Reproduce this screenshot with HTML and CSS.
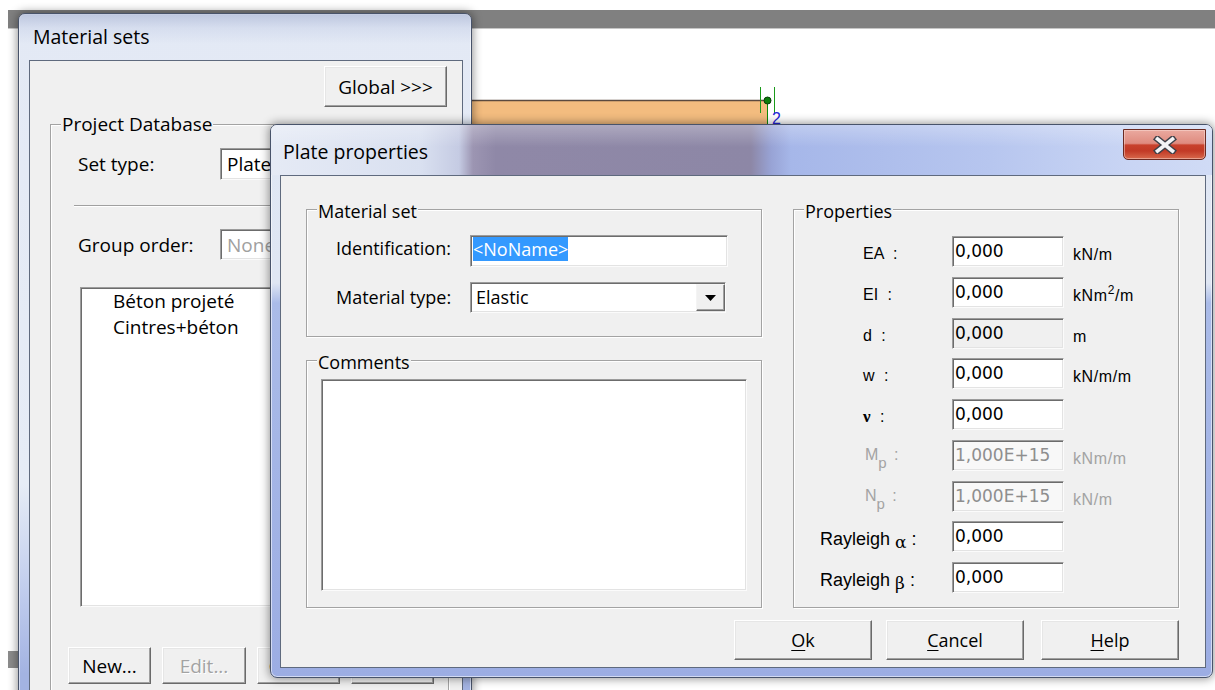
FILE: index.html
```html
<!DOCTYPE html>
<html lang="en">
<head>
<meta charset="utf-8">
<title>Plate properties</title>
<link rel="stylesheet" href="styles.css">
</head>
<body>
<div class="desktop">
  <!-- model view behind the dialogs -->
  <div class="app">
    <div class="ruler"></div>
    <svg class="drawing" width="1207" height="661" viewBox="8 29 1207 661">
      <rect x="8" y="651" width="11" height="17" fill="#8c8c8c"/>
      <rect x="380" y="100" width="387" height="120" fill="#f3bc7f"/>
      <line x1="380" y1="100.5" x2="767" y2="100.5" stroke="#5b4a3f" stroke-width="1.5"/>
      <line x1="767.5" y1="100" x2="767.5" y2="220" stroke="#0a8a0a"/>
      <line x1="760.5" y1="87" x2="760.5" y2="113" stroke="#1a9a1a"/>
      <line x1="774.5" y1="87" x2="774.5" y2="113" stroke="#1a9a1a"/>
      <circle cx="767.5" cy="100.5" r="3.5" fill="#0b7d0b" stroke="#063f06" stroke-width="1"/>
      <text x="772" y="124" class="node-label">2</text>
    </svg>
  </div>

  <!-- Material sets window -->
  <section class="window sets">
    <header class="win-titlebar"><h1 class="win-title">Material sets</h1></header>
    <div class="win-body">
      <div class="client sets-client">
        <div class="sets-top"><button class="btn btn-global" type="button">Global &gt;&gt;&gt;</button></div>
        <div class="group db-group">
          <div class="group-title">Project Database</div>
          <div class="db-row first"><span class="db-label">Set type:</span><div class="field db-combo"><span>Plate</span></div></div>
          <div class="etched"></div>
          <div class="db-row"><span class="db-label">Group order:</span><div class="field db-combo"><span class="muted">None</span></div></div>
          <ul class="field listbox">
            <li>Béton projeté</li>
            <li>Cintres+béton</li>
          </ul>
          <div class="db-actions">
            <button class="btn w83" type="button">New...</button>
            <button class="btn w84" type="button" disabled>Edit...</button>
            <button class="btn w83" type="button">Copy...</button>
            <button class="btn w83" type="button">Delete</button>
          </div>
        </div>
      </div>
    </div>
  </section>

  <!-- Plate properties dialog -->
  <section class="window dialog">
    <header class="win-titlebar">
      <h1 class="win-title">Plate properties</h1>
      <button class="close" type="button" aria-label="Close">
        <svg width="24" height="18" viewBox="0 0 24 18">
          <path d="M4.5 3 L19.5 15 M19.5 3 L4.5 15" stroke="#3e4048" stroke-width="6.5" stroke-linecap="square" fill="none"/>
          <path d="M4.5 3 L19.5 15 M19.5 3 L4.5 15" stroke="#f4f4f6" stroke-width="3.6" stroke-linecap="square" fill="none"/>
        </svg>
      </button>
    </header>
    <div class="win-body">
      <div class="client dlg-client">
        <div class="left-col">
          <div class="group set-group">
            <div class="group-title">Material set</div>
            <div class="set-row first">
              <span class="set-label">Identification:</span>
              <div class="field name-edit"><span class="sel">&lt;NoName&gt;</span></div>
            </div>
            <div class="set-row second">
              <span class="set-label">Material type:</span>
              <div class="field type-combo">
                <span class="combo-text">Elastic</span>
                <span class="drop"><svg width="11" height="6" viewBox="0 0 11 6"><path d="M0 0H11L5.5 6Z" fill="#000"/></svg></span>
              </div>
            </div>
          </div>
          <div class="group comments-group">
            <div class="group-title">Comments</div>
            <div class="field memo"></div>
          </div>
        </div>

        <div class="group props-group">
          <div class="group-title">Properties</div>
          <div class="props">
            <span class="plabel">EA :</span><div class="field num">0,000</div><span class="unit">kN/m</span>
            <span class="plabel">EI :</span><div class="field num">0,000</div><span class="unit">kNm<sup>2</sup>/m</span>
            <span class="plabel">d :</span><div class="field num readonly">0,000</div><span class="unit">m</span>
            <span class="plabel">w :</span><div class="field num">0,000</div><span class="unit">kN/m/m</span>
            <span class="plabel nu"><b>ν</b> :</span><div class="field num">0,000</div><span class="unit"></span>
            <span class="plabel off">M<sub>p</sub> :</span><div class="field num off">1,000E+15</div><span class="unit off">kNm/m</span>
            <span class="plabel off">N<sub>p</sub> :</span><div class="field num off">1,000E+15</div><span class="unit off">kN/m</span>
            <span class="plabel wide">Rayleigh <span class="greek">α</span> :</span><div class="field num">0,000</div><span class="unit"></span>
            <span class="plabel wide">Rayleigh <span class="greek">β</span> :</span><div class="field num">0,000</div><span class="unit"></span>
          </div>
        </div>

        <div class="dlg-actions">
          <button class="btn dlg-btn" type="button"><u>O</u>k</button>
          <button class="btn dlg-btn" type="button"><u>C</u>ancel</button>
          <button class="btn dlg-btn help" type="button"><u>H</u>elp</button>
        </div>
      </div>
    </div>
  </section>
</div>
</body>
</html>
```

FILE: styles.css
```css
* { box-sizing: border-box; }

html, body { margin: 0; padding: 0; }

body {
  width: 1215px;
  height: 690px;
  overflow: hidden;
  background: #fff;
  color: #000;
  font-family: "Open Sans", "Noto Sans", sans-serif;
  font-size: 18px;
}

h1 { margin: 0; font-weight: normal; }
ul { margin: 0; padding: 0; list-style: none; }
button { font: inherit; color: inherit; padding: 0; margin: 0; }

.desktop {
  position: relative;
  width: 1215px;
  height: 690px;
  overflow: hidden;
  background: #fff;
}

/* ---------- model view ---------- */
.app { padding: 10px 0 0 8px; }
.ruler {
  height: 19px;
  background: #808080;
  border-bottom: 1px solid #c6c6c6;
}
.drawing { display: block; }
.node-label { font: 16px "Liberation Sans", sans-serif; fill: #2424d8; }

/* ---------- classic controls ---------- */
.field {
  background: #fff;
  border: 1px solid;
  border-color: #9c9c9c #fbfbfb #fbfbfb #9c9c9c;
  box-shadow: inset 1px 1px 0 #6c6c6c, inset -1px -1px 0 #e3e3e3;
}

.btn {
  display: flex;
  align-items: center;
  justify-content: center;
  background: #f0f0f0;
  border: 1px solid;
  border-color: #fff #6a6a6a #6a6a6a #fff;
  box-shadow: inset -1px -1px 0 #a0a0a0, inset 1px 1px 0 #e6e6e6;
  line-height: 24px;
  white-space: nowrap;
}
.btn:disabled { color: #a3a3a3; text-shadow: 1px 1px 0 #fff; }
.btn u { text-decoration-thickness: 1px; text-underline-offset: 3px; }

.group {
  border: 1px solid #a3a3a3;
  box-shadow: inset 1px 1px 0 #fff, 1px 1px 0 #fff;
}
.group-title {
  width: max-content;
  margin: -10px 0 0 10px;
  padding: 0 1px;
  background: #f0f0f0;
  line-height: 22px;
}

/* ---------- window frames ---------- */
.window {
  position: absolute;
  display: flex;
  flex-direction: column;
  border: 1px solid #48536a;
  box-shadow: 0 0 10px 1px rgba(0, 0, 0, .42), inset 0 0 0 1px rgba(255, 255, 255, .55);
}
.win-titlebar { flex: none; display: flex; align-items: flex-start; }
.win-title { font-size: 19.5px; line-height: 24px; white-space: nowrap; }
.win-body { flex: 1; min-height: 0; display: flex; flex-direction: column; }
.client {
  flex: 1;
  min-height: 0;
  background: #f0f0f0;
  border: 1px solid #5f6a7e;
}

/* ---------- Material sets ---------- */
.sets {
  left: 18px;
  top: 13px;
  width: 454px;
  height: 700px;
  border-radius: 7px 7px 0 0;
  font-size: 19px;
  background: linear-gradient(#e3e9f5 0, #e6ecf6 470px, #c3cfee 570px, #a3b3e2 660px);
}
.sets .win-titlebar {
  height: 46px;
  border-radius: 6px 6px 0 0;
  background: linear-gradient(to bottom, rgba(150, 163, 200, .5) 0, rgba(180, 192, 222, .28) 14px, rgba(255, 255, 255, 0) 30px);
}
.sets .win-title { padding: 11px 0 0 14px; }
.sets .win-body { padding: 0 8px 0 10px; }

.sets-top { display: flex; justify-content: flex-end; padding: 5px 15px 0 0; }
.btn-global { width: 123px; height: 41px; }

.db-group { margin: 17px 13px 0 20px; height: 640px; }
.db-group .group-title { margin-top: -12px; }
.db-row { display: flex; align-items: center; padding-left: 27px; height: 32px; }
.db-row.first { margin-top: 13px; }
.db-row + .etched + .db-row { margin-top: 22px; height: 31px; }
.db-label { width: 142px; }
.db-combo { width: 220px; height: 100%; padding-left: 6px; line-height: 30px; }
.muted { color: #a0a0a0; }
.etched {
  margin: 25px 0 0 23px;
  width: 366px;
  height: 2px;
  border-top: 1px solid #a0a0a0;
  border-bottom: 1px solid #fff;
}
.listbox {
  margin: 27px 0 0 29px;
  width: 360px;
  height: 320px;
  padding: 0 0 0 32px;
  line-height: 26px;
}
.db-actions { display: flex; gap: 11px; margin-top: 40px; padding-left: 17px; }
.db-actions .btn { height: 37px; }
.w83 { width: 83px; }
.w84 { width: 84px; }

/* ---------- Plate properties ---------- */
.dialog {
  left: 270px;
  top: 124px;
  width: 943px;
  height: 554px;
  border-radius: 7px;
  background: linear-gradient(#e0e7f4 0, #dfe6f3 158px, #aabbe8 178px, #9cade3 100%);
}
.dialog .win-titlebar {
  height: 50px;
  border-radius: 6px 6px 0 0;
  background:
    linear-gradient(to bottom, rgba(255, 255, 255, .28) 0, rgba(255, 255, 255, 0) 22px),
    linear-gradient(to right, #e5eaf5 0, #d9e0f0 150px, #c5cbe3 188px, #9c95b2 202px, #8f88a7 225px,
      #8d87a6 480px, #98a3d5 500px, #a6b7e9 520px, #b7c6ef 720px, #c9d5f4 860px, #d0dbf5 941px);
}
.dialog .win-title { padding: 15px 0 0 12px; }
.dialog .win-body { padding: 0 6px 9px 9px; }

.close {
  display: flex;
  align-items: center;
  justify-content: center;
  width: 83px;
  height: 31px;
  margin: 4px 6px 0 auto;
  border: 1px solid #6b2a22;
  border-radius: 0 0 5px 5px;
  background: linear-gradient(#eaa99f 0, #df8b7f 46%, #c8412c 52%, #c23a26 72%, #d8694c 100%);
  box-shadow: inset 0 0 0 1px rgba(255, 230, 225, .45);
}

.dlg-client {
  display: grid;
  grid-template-columns: 456px 386px;
  grid-template-rows: 399px 40px;
  column-gap: 31px;
  row-gap: 12px;
  padding: 33px 26px 7px 25px;
}
.left-col { display: flex; flex-direction: column; gap: 23px; }

.set-group { height: 128px; }
.set-group .group-title { margin-bottom: 13px; }
.set-row { display: flex; align-items: flex-start; padding-left: 29px; }
.set-row.second { margin-top: 15px; }
.set-label { width: 134px; line-height: 26px; }
.set-row.second .set-label { line-height: 30px; }

.name-edit { width: 258px; height: 32px; padding-left: 2px; line-height: 26px; }
.sel { background: #3399ff; color: #fff; }

.type-combo { display: flex; width: 256px; height: 31px; }
.combo-text { flex: 1; padding-left: 5px; line-height: 29px; }
.drop {
  display: flex;
  align-items: center;
  justify-content: center;
  width: 29px;
  height: 27px;
  margin: 1px 0 0 0;
  background: #f0f0f0;
  border: 1px solid;
  border-color: #f4f4f4 #6a6a6a #6a6a6a #f4f4f4;
  box-shadow: inset -1px -1px 0 #a0a0a0;
}

.comments-group { height: 248px; }
.comments-group .group-title { margin-bottom: 6px; }
.memo { width: 426px; height: 212px; margin-left: 14px; }

.props-group .group-title { margin-bottom: 14px; }
.props {
  display: grid;
  grid-template-columns: 158px 112px auto;
  grid-auto-rows: 31px;
  row-gap: 9.75px;
}
.plabel {
  padding: 8px 0 0 69px;
  font: 16px/20px "Liberation Sans", Arial, sans-serif;
  word-spacing: 5px;
  white-space: nowrap;
}
.plabel.nu { padding-top: 8px; }
.plabel.nu b { font: bold 17px "Liberation Serif", serif; }
.plabel.off { color: #a3a3a3; padding-left: 71px; padding-top: 5px; word-spacing: 3px; }
.plabel sub { font-size: 15px; vertical-align: -8px; }
.plabel.wide { padding: 7px 0 0 26px; font-size: 18px; line-height: 22px; word-spacing: 0; }
.greek { font-family: "DejaVu Serif", serif; font-size: 17px; position: relative; top: 3px; }

.num {
  padding-left: 2px;
  font: 17px/29px "DejaVu Sans", sans-serif;
  white-space: nowrap;
  overflow: hidden;
}
.num.readonly { background: #f0f0f0; }
.num.off { background: #f8f8f8; color: #8e8e8e; }

.unit {
  padding: 9px 0 0 9px;
  font: 16px/20px "Liberation Sans", Arial, sans-serif;
  letter-spacing: .6px;
  white-space: nowrap;
}
.unit.off { color: #a3a3a3; }
.unit sup { font-size: 12px; vertical-align: 7px; line-height: 0; }

.dlg-actions {
  grid-column: 1 / -1;
  display: flex;
  justify-content: flex-end;
  gap: 14px;
}
.dlg-btn { width: 138px; height: 40px; }
.dlg-btn.help { margin-left: 3px; }
```
